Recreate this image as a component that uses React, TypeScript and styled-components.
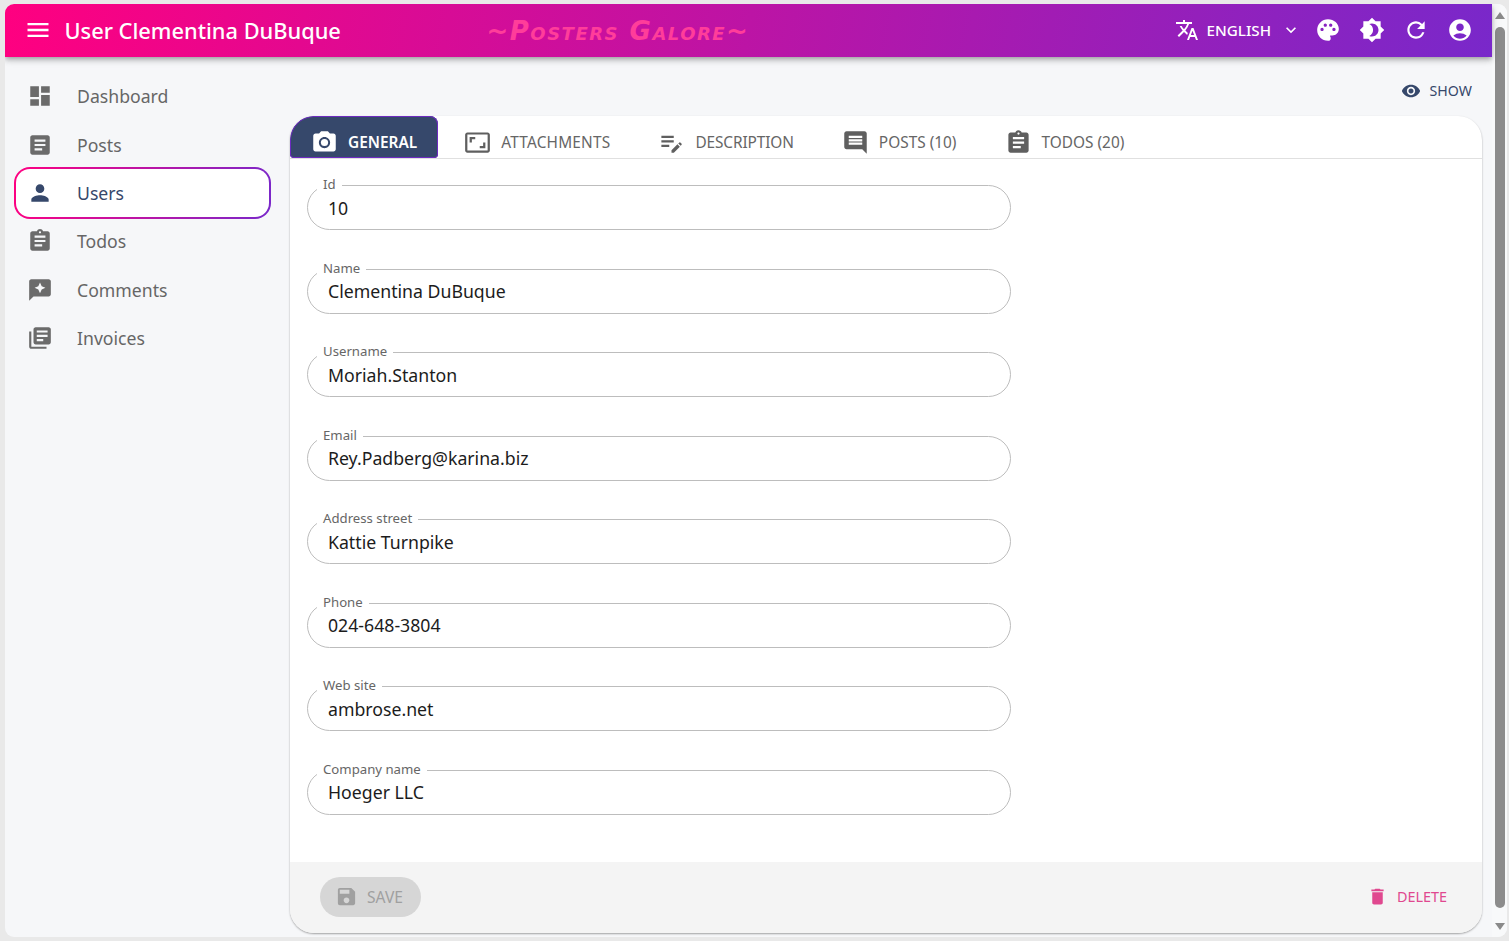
import React from 'react'
import styled, { createGlobalStyle } from 'styled-components'
import {
  MdAccountCircle,
  MdArticle,
  MdAspectRatio,
  MdAssignment,
  MdBrightness4,
  MdComment,
  MdDashboard,
  MdDelete,
  MdEditNote,
  MdExpandMore,
  MdLibraryBooks,
  MdMenu,
  MdPalette,
  MdPerson,
  MdPhotoCamera,
  MdRefresh,
  MdReviews,
  MdSave,
  MdTranslate,
  MdVisibility,
} from 'react-icons/md'

const navy = '#36486b'
const gradient = 'linear-gradient(100deg, #ff0080 0%, #7928ca 100%)'

const GlobalStyle = createGlobalStyle`
  html, body {
    margin: 0;
    height: 100%;
    overflow: hidden;
    background: #e9e9e9;
    font-family: "Noto Sans", "Open Sans", sans-serif;
  }
  * { box-sizing: border-box; }
`

const Win = styled.div`
  display: flex;
  width: 1502px;
  height: 933px;
  margin: 4px 0 0 5px;
  border-radius: 9px;
  overflow: hidden;
  background: #f6f7f9;
`

const Page = styled.div`
  flex: 1;
  min-width: 0;
  display: flex;
  flex-direction: column;
`

const AppBar = styled.header`
  position: relative;
  z-index: 2;
  flex: 0 0 53px;
  display: flex;
  align-items: center;
  padding: 0 19px 1px 18.5px;
  color: #fff;
  background: ${gradient};
  box-shadow: 0 2px 4px -1px rgba(0, 0, 0, .2), 0 4px 5px rgba(0, 0, 0, .14), 0 1px 10px rgba(0, 0, 0, .12);
`

const Title = styled.h1`
  margin: 0 0 0 13px;
  width: 422px;
  font-size: 21.8px;
  font-weight: 500;
  white-space: nowrap;
`

const Logo = styled.div`
  flex: 1;
  margin-top: 1px;
  font-family: "DejaVu Sans", sans-serif;
  font-size: 26px;
  font-weight: 700;
  font-style: italic;
  font-variant: small-caps;
  letter-spacing: 1.5px;
  white-space: nowrap;
  color: #ff3d9a;
`

const LangButton = styled.div`
  display: flex;
  align-items: center;
  font-size: 15.2px;
  font-weight: 500;
  margin-right: 14px;
`

const LangLabel = styled.span`
  margin: 0 10px 0 8px;
`

const BarIcons = styled.div`
  display: flex;
  align-items: center;
  gap: 18px;
`

const Body = styled.div`
  flex: 1;
  min-height: 0;
  display: flex;
`

const Sidebar = styled.nav`
  flex: 0 0 285px;
  padding: 15px 0 0 9px;
`

const MenuItem = styled.div<{ $active?: boolean }>`
  display: flex;
  align-items: center;
  width: 257px;
  height: ${p => (p.$active ? '52.4px' : '48.4px')};
  margin: ${p => (p.$active ? '-2px 0' : '0')};
  padding-left: ${p => (p.$active ? '11px' : '13px')};
  gap: 24px;
  font-size: 17.65px;
  color: ${p => (p.$active ? navy : '#666')};
  border-radius: 16px;
  border: ${p => (p.$active ? '2px solid transparent' : '0')};
  background: ${p =>
    p.$active
      ? `linear-gradient(#fff, #fff) padding-box, linear-gradient(100deg, #ff0080, #7928ca) border-box`
      : 'none'};
  svg {
    flex: none;
    color: ${p => (p.$active ? navy : '#6b6b6b')};
  }
`

const Content = styled.main`
  flex: 1;
  min-width: 0;
  display: flex;
  flex-direction: column;
  margin: 0 10px 4px 0;
`

const Actions = styled.div`
  flex: 0 0 59px;
  display: flex;
  align-items: center;
  justify-content: flex-end;
  padding: 8px 10px 0 0;
`

const ShowButton = styled.div`
  display: flex;
  align-items: center;
  gap: 9px;
  font-size: 14.2px;
  color: ${navy};
`

const Card = styled.section`
  flex: 1;
  min-height: 0;
  display: flex;
  flex-direction: column;
  border-radius: 24px;
  background: #fff;
  overflow: hidden;
  box-shadow: 0 1px 2px rgba(0, 0, 0, .35);
`

const Tabs = styled.div`
  flex: 0 0 43px;
  display: flex;
  border-bottom: 1px solid #e0e0e0;
`

const Tab = styled.div<{ $active?: boolean; $spacing?: number }>`
  display: flex;
  align-items: center;
  gap: 10px;
  height: 42px;
  margin-right: ${p => (p.$active ? '2px' : '0')};
  padding: ${p => (p.$active ? '10px 21px 0 21px' : '10px 24px 0')};
  font-size: 15.4px;
  font-weight: ${p => (p.$active ? 600 : 400)};
  letter-spacing: ${p => p.$spacing ?? 0}px;
  white-space: nowrap;
  color: ${p => (p.$active ? '#fff' : '#666')};
  background: ${p => (p.$active ? navy : 'none')};
  border-radius: ${p => (p.$active ? '24px 8px 4px 4px' : '0')};
  box-shadow: ${p => (p.$active ? 'inset 0 0 0 1px #6d2bc0' : 'none')};
  svg {
    flex: none;
    color: ${p => (p.$active ? '#fff' : '#5f5f5f')};
  }
`

const Form = styled.div`
  flex: 1;
  display: flex;
  flex-direction: column;
  gap: 38.55px;
  padding: 26px 0 0 17px;
`

const Field = styled.div`
  position: relative;
  display: flex;
  align-items: center;
  width: 704px;
  height: 45px;
  padding: 0 20px;
  border: 1px solid #bdbdbd;
  border-radius: 23px;
  font-size: 17.7px;
  color: #1c1c1c;
`

const FieldLabel = styled.span`
  position: absolute;
  top: -10px;
  left: 9px;
  padding: 0 6px;
  background: #fff;
  font-size: 13.2px;
  line-height: 16px;
  color: #666;
`

const Footer = styled.div`
  flex: 0 0 71px;
  display: flex;
  align-items: center;
  justify-content: space-between;
  padding: 0 35px 2px 30px;
  background: #f4f4f4;
`

const SaveButton = styled.div`
  display: flex;
  align-items: center;
  gap: 9px;
  width: 101px;
  height: 40px;
  padding-left: 15px;
  border-radius: 20px;
  background: #d6d6d6;
  color: #a0a0a0;
  font-size: 15.6px;
`

const DeleteButton = styled.div`
  display: flex;
  align-items: center;
  gap: 9px;
  color: #e0488f;
  font-size: 14.4px;
`

const Scrollbar = styled.div`
  flex: 0 0 15px;
  display: flex;
  flex-direction: column;
  align-items: center;
  padding: 8px 0 7px;
  background: #f8f9fa;
  color: #8a8a8a;
`

const ScrollThumb = styled.div`
  flex: 1;
  width: 10px;
  margin: 8px 0 15px;
  border-radius: 5px;
  background: #8c8c8c;
`

const Arrow = ({ down }: { down?: boolean }) => (
  <svg width="10" height="7" viewBox="0 0 10 7" fill="currentColor">
    <path d={down ? 'M0 0h10L5 7z' : 'M0 7h10L5 0z'} />
  </svg>
)

const menu = [
  { label: 'Dashboard', icon: MdDashboard },
  { label: 'Posts', icon: MdArticle },
  { label: 'Users', icon: MdPerson, active: true },
  { label: 'Todos', icon: MdAssignment },
  { label: 'Comments', icon: MdReviews },
  { label: 'Invoices', icon: MdLibraryBooks },
]

const tabs = [
  { label: 'GENERAL', icon: MdPhotoCamera, active: true },
  { label: 'ATTACHMENTS', icon: MdAspectRatio, spacing: 0.2 },
  { label: 'DESCRIPTION', icon: MdEditNote, spacing: -0.1 },
  { label: 'POSTS (10)', icon: MdComment },
  { label: 'TODOS (20)', icon: MdAssignment },
]

const fields = [
  ['Id', '10'],
  ['Name', 'Clementina DuBuque'],
  ['Username', 'Moriah.Stanton'],
  ['Email', 'Rey.Padberg@karina.biz'],
  ['Address street', 'Kattie Turnpike'],
  ['Phone', '024-648-3804'],
  ['Web site', 'ambrose.net'],
  ['Company name', 'Hoeger LLC'],
]

export default function App() {
  return (
    <Win>
      <GlobalStyle />
      <Page>
        <AppBar>
          <MdMenu size={28} />
          <Title>User Clementina DuBuque</Title>
          <Logo>~Posters Galore~</Logo>
          <LangButton>
            <MdTranslate size={24} />
            <LangLabel>ENGLISH</LangLabel>
            <MdExpandMore size={20} />
          </LangButton>
          <BarIcons>
            <MdPalette size={26} />
            <MdBrightness4 size={26} />
            <MdRefresh size={26} />
            <MdAccountCircle size={26} />
          </BarIcons>
        </AppBar>
        <Body>
          <Sidebar>
            {menu.map(({ label, icon: Icon, active }) => (
              <MenuItem key={label} $active={active}>
                <Icon size={26} />
                {label}
              </MenuItem>
            ))}
          </Sidebar>
          <Content>
            <Actions>
              <ShowButton>
                <MdVisibility size={20} />
                SHOW
              </ShowButton>
            </Actions>
            <Card>
              <Tabs>
                {tabs.map(({ label, icon: Icon, active, spacing }) => (
                  <Tab key={label} $active={active} $spacing={spacing}>
                    <Icon size={27} />
                    {label}
                  </Tab>
                ))}
              </Tabs>
              <Form>
                {fields.map(([label, value]) => (
                  <Field key={label}>
                    <FieldLabel>{label}</FieldLabel>
                    {value}
                  </Field>
                ))}
              </Form>
              <Footer>
                <SaveButton>
                  <MdSave size={23} />
                  SAVE
                </SaveButton>
                <DeleteButton>
                  <MdDelete size={21} />
                  DELETE
                </DeleteButton>
              </Footer>
            </Card>
          </Content>
        </Body>
      </Page>
      <Scrollbar>
        <Arrow />
        <ScrollThumb />
        <Arrow down />
      </Scrollbar>
    </Win>
  )
}
